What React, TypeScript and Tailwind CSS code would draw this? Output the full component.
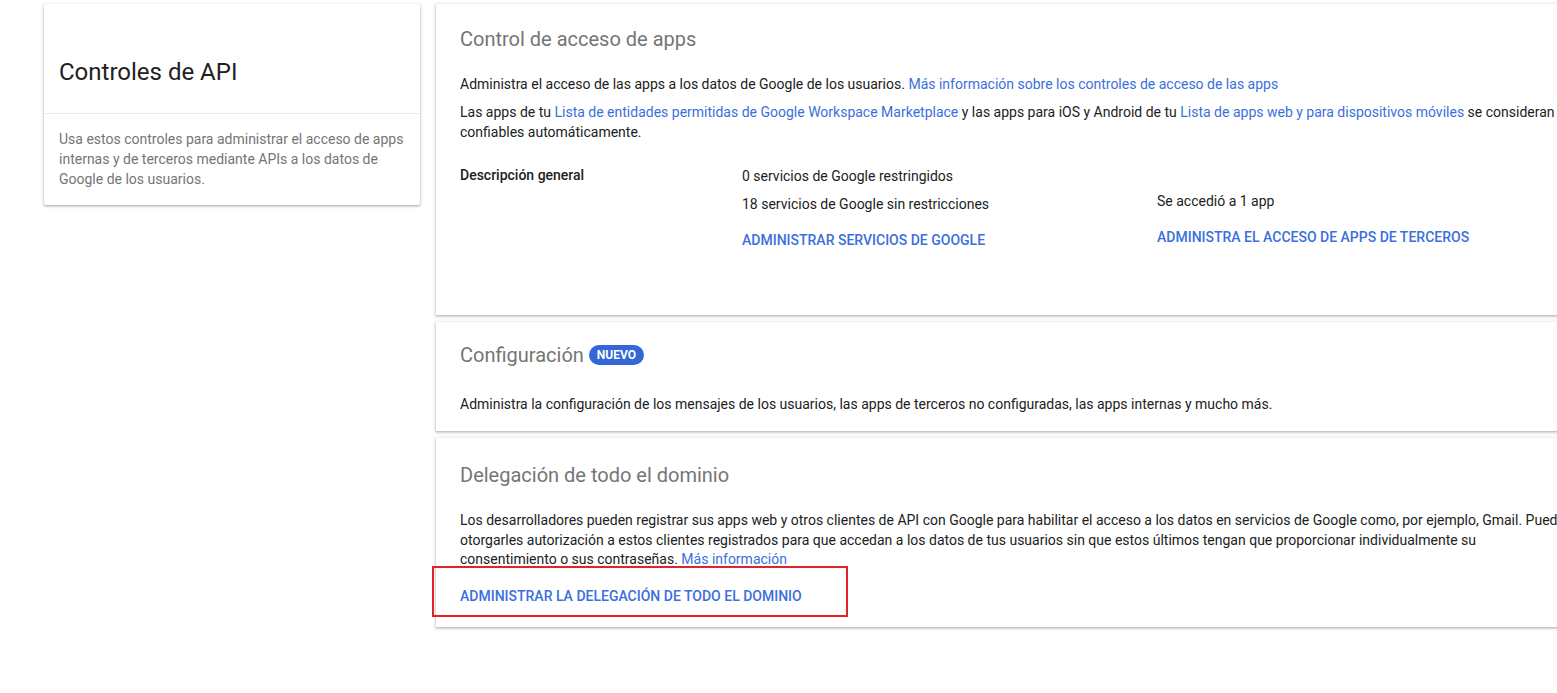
import React from "react";

const font = { fontFamily: "Roboto, 'Noto Sans', Arial, sans-serif" };
const card =
  "bg-white shadow-[0_1px_2px_0_rgba(60,64,67,0.3),0_1px_3px_1px_rgba(60,64,67,0.15)]";
const link = "text-[#3b6fdc]";
const action = "text-[14px] leading-[20px] font-medium text-[#3b6fdc] uppercase";

export default function App() {
  return (
    <div
      style={font}
      className="w-[1557px] h-[693px] overflow-hidden bg-white flex items-start gap-4 pl-[44px] pt-[4px] text-[#212121]"
    >
      {/* Left card */}
      <div className={`${card} w-[376px] shrink-0 rounded-[2px]`}>
        <div className="h-[110px] border-b border-[#e8e8e8] pl-[15px] pt-[52px]">
          <h1 className="text-[24px] leading-[32px] text-[#212121]">Controles de API</h1>
        </div>
        <p className="px-[15px] pt-[15px] pb-[16px] text-[14px] leading-[20px] text-[#757575]">
          Usa estos controles para administrar el acceso de apps internas y de terceros mediante
          APIs a los datos de Google de los usuarios.
        </p>
      </div>

      {/* Right column */}
      <div className="w-[1220px] shrink-0 flex flex-col gap-[7px]">
        {/* Card 1 */}
        <div className={`${card} h-[311px] px-6 pt-[21px]`}>
          <h2 className="text-[20px] leading-[28px] text-[#757575]">Control de acceso de apps</h2>
          <p className="mt-[21px] text-[14px] leading-[20px]">
            Administra el acceso de las apps a los datos de Google de los usuarios.{" "}
            <span className={link}>Más información sobre los controles de acceso de las apps</span>
          </p>
          <p className="mt-[8px] text-[14px] leading-[20px] whitespace-nowrap">
            Las apps de tu{" "}
            <span className={link}>Lista de entidades permitidas de Google Workspace Marketplace</span>{" "}
            y las apps para iOS y Android de tu{" "}
            <span className={link}>Lista de apps web y para dispositivos móviles</span> se consideran
            <br />
            confiables automáticamente.
          </p>
          <div className="mt-[23px] flex text-[14px] leading-[20px]">
            <div className="w-[282px] shrink-0 font-medium">Descripción general</div>
            <div className="w-[415px] shrink-0 flex flex-col">
              <div className="mt-[1px]">0 servicios de Google restringidos</div>
              <div className="mt-[8px]">18 servicios de Google sin restricciones</div>
              <div className={`${action} mt-[16px]`}>Administrar servicios de Google</div>
            </div>
            <div className="flex flex-col">
              <div className="mt-[26px]">Se accedió a 1 app</div>
              <div className={`${action} mt-[16px]`}>Administra el acceso de apps de terceros</div>
            </div>
          </div>
        </div>

        {/* Card 2 */}
        <div className={`${card} h-[109px] px-6 pt-[19px]`}>
          <div className="flex items-center gap-[5px]">
            <h2 className="text-[20px] leading-[28px] text-[#757575]">Configuración</h2>
            <span className="inline-flex items-center h-[20px] px-[8px] rounded-full bg-[#3367d6] text-white text-[12px] font-bold leading-none">
              NUEVO
            </span>
          </div>
          <p className="mt-[25px] text-[14px] leading-[20px]">
            Administra la configuración de los mensajes de los usuarios, las apps de terceros no
            configuradas, las apps internas y mucho más.
          </p>
        </div>

        {/* Card 3 */}
        <div className={`${card} relative h-[189px] px-6 pt-[23px]`}>
          <h2 className="text-[20px] leading-[28px] text-[#757575]">Delegación de todo el dominio</h2>
          <p className="mt-[22px] text-[14px] leading-[19.5px] whitespace-nowrap">
            Los desarrolladores pueden registrar sus apps web y otros clientes de API con Google para
            habilitar el acceso a los datos en servicios de Google como, por ejemplo, Gmail. Puedes
            <br />
            otorgarles autorización a estos clientes registrados para que accedan a los datos de tus
            usuarios sin que estos últimos tengan que proporcionar individualmente su
            <br />
            consentimiento o sus contraseñas. <span className={link}>Más información</span>
          </p>
          <div className={`${action} mt-[16px]`}>Administrar la delegación de todo el dominio</div>
          <div className="absolute left-[-4px] top-[128px] w-[416px] h-[51px] border-2 border-[#e3232b] pointer-events-none" />
        </div>
      </div>
    </div>
  );
}
